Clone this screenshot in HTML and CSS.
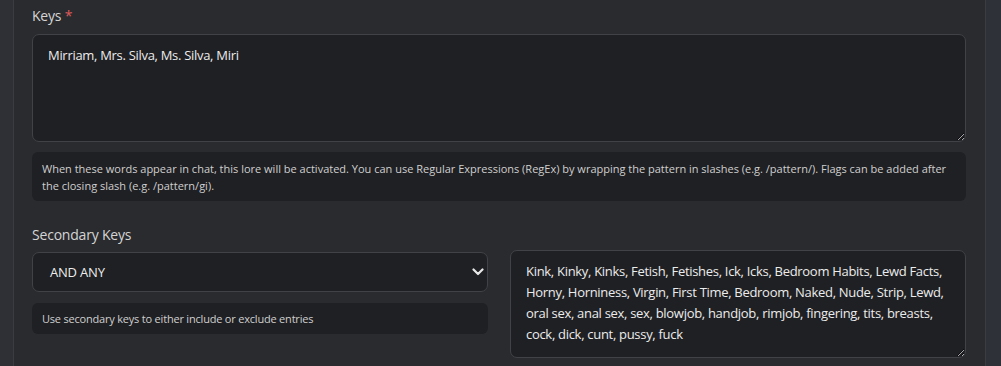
FILE: index.html
```html
<!DOCTYPE html>
<html>
<head>
<meta charset="utf-8">
<link rel="stylesheet" href="styles.css">
</head>
<body>
<div class="page">
  <div class="sidebar"></div>
  <main class="panel">
    <section class="field">
      <label class="label">Keys <span class="req">*</span></label>
      <textarea class="input area-keys">Mirriam, Mrs. Silva, Ms. Silva, Miri</textarea>
      <div class="help">When these words appear in chat, this lore will be activated. You can use Regular Expressions (RegEx) by wrapping the pattern in slashes (e.g. /pattern/). Flags can be added after the closing slash (e.g. /pattern/gi).</div>
    </section>
    <section class="field secondary">
      <label class="label">Secondary Keys</label>
      <div class="cols">
        <div class="col-left">
          <div class="select">
            <span class="select-value">AND ANY</span>
            <svg class="chev" width="12" height="8" viewBox="0 0 12 8"><path d="M1.5 1.5 L6 6 L10.5 1.5" fill="none" stroke="#e8e8e8" stroke-width="2.2" stroke-linecap="round" stroke-linejoin="round"/></svg>
          </div>
          <div class="help help-small">Use secondary keys to either include or exclude entries</div>
        </div>
        <textarea class="input area-sec">Kink, Kinky, Kinks, Fetish, Fetishes, Ick, Icks, Bedroom Habits, Lewd Facts, Horny, Horniness, Virgin, First Time, Bedroom, Naked, Nude, Strip, Lewd, oral sex, anal sex, sex, blowjob, handjob, rimjob, fingering, tits, breasts, cock, dick, cunt, pussy, fuck</textarea>
      </div>
    </section>
  </main>
  <div class="rightbar"></div>
</div>
</body>
</html>
```

FILE: styles.css
```css
* { box-sizing: border-box; }
html, body { margin: 0; padding: 0; height: 100%; background: #2a2b2f; overflow: hidden; }
body { font-family: "Open Sans", "Noto Sans", sans-serif; color: #d6d6d6; }
.page { display: flex; height: 366px; }
.sidebar { width: 14px; background: #2e3035; border-right: 1px solid #3a3c42; flex: none; }
.rightbar { width: 16px; background: #2e3137; border-left: 1px solid #3a3c42; flex: none; }
.panel { flex: 1; padding: 6px 19px 0 18px; background: #2a2b2f; }
.field { display: flex; flex-direction: column; }
.label { font-size: 14px; line-height: 20px; color: #d4d4d4; margin-bottom: 8px; letter-spacing: -0.2px; }
.req { color: #e05a5a; }
.input {
  background: #1f2023; border: 1px solid #414247; border-radius: 7px;
  color: #ececec; font-family: inherit; font-size: 13px; resize: vertical;
  outline: none; display: block; width: 100%; letter-spacing: -0.3px;
}
.area-keys { height: 108px; padding: 10px 15px; line-height: 20px; }
.help {
  background: #1f2023; border-radius: 6px; color: #cfcfcf;
  font-size: 11px; line-height: 17px; padding: 8px 12px 7px 10px; margin-top: 10px; letter-spacing: 0;
}
.secondary { margin-top: 24px; }
.secondary .label { margin-bottom: 5px; }
.cols { display: grid; grid-template-columns: 1fr 1fr; column-gap: 22px; align-items: start; }
.col-left { display: flex; flex-direction: column; padding-top: 2px; }
.select {
  height: 40px; background: #1f2023; border: 1px solid #414247; border-radius: 7px;
  display: flex; align-items: center; justify-content: space-between; padding: 0 3px 0 17px;
}
.select-value { font-size: 13px; color: #ececec; letter-spacing: -0.2px; }
.help-small { margin-top: 11px; padding: 7px 10px; line-height: 17px; letter-spacing: -0.2px; }
.area-sec { height: 108px; padding: 10px 15px; line-height: 21px; }
```
